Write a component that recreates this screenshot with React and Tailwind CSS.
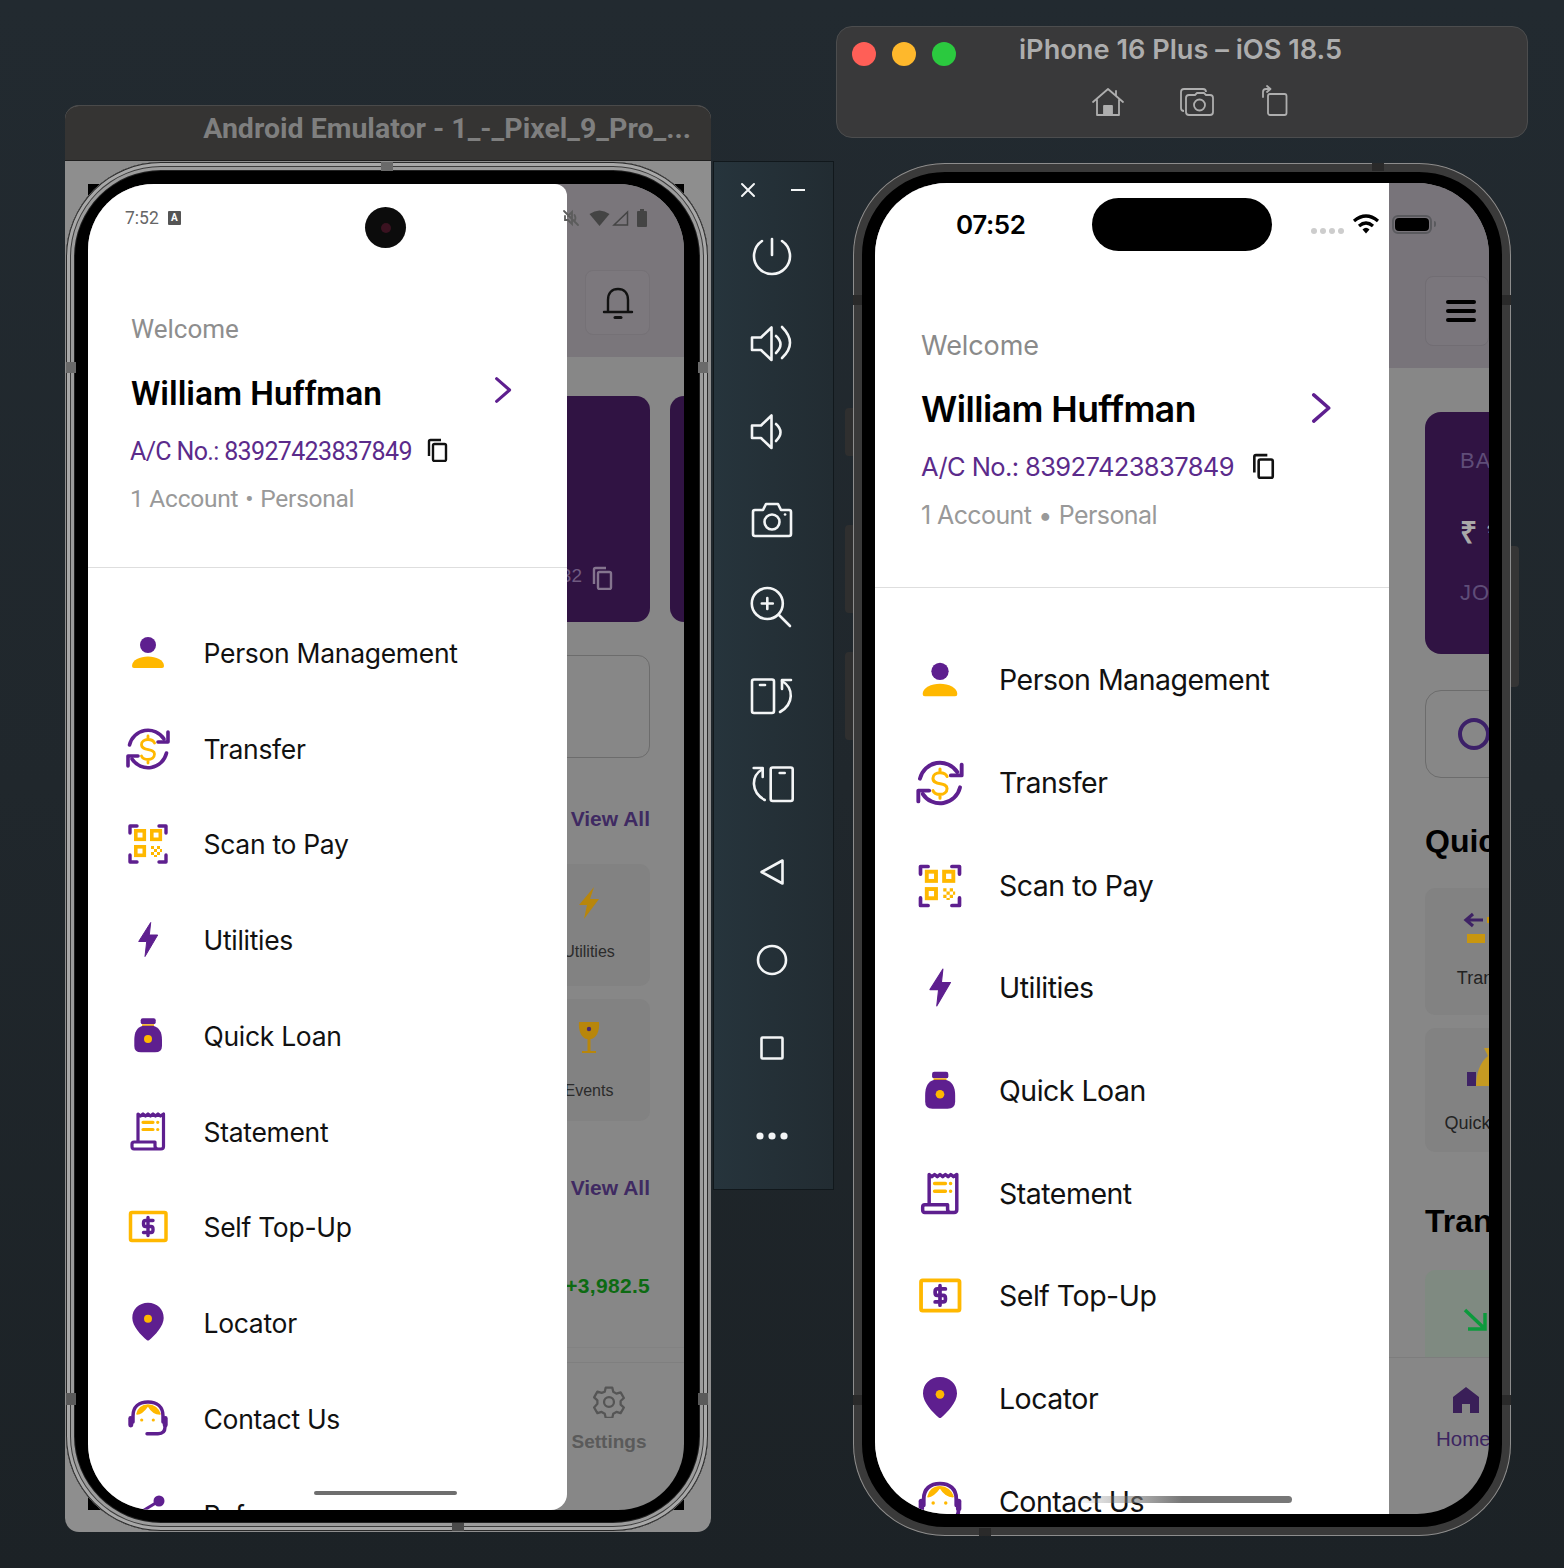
const P = "#5e1f8f";
const Y = "#ffb800";

function MenuIcon({ name, size }) {
  const common = { width: size, height: size, viewBox: "0 0 48 48", fill: "none", className: "shrink-0" };
  const stroke = { strokeLinecap: "round", strokeLinejoin: "round" };
  if (name === "person")
    return (
      <svg {...common}>
        <circle cx="24" cy="16" r="8" fill={P} />
        <path d="M8 37c0-6 8-9.500 16-9.500s16 3.500 16 9.500q0 2-2 2H10q-2 0-2-2z" fill={Y} />
      </svg>
    );
  if (name === "transfer")
    return (
      <svg {...common} {...stroke}>
        <g stroke={P} strokeWidth="3.600">
          <path d="M5.500 20A19 19 0 0 1 40 14" />
          <path d="M44 7V17H34" />
          <path d="M42.500 28A19 19 0 0 1 8 34" />
          <path d="M4 41V31H14" />
        </g>
        <path d="M30.500 18c-1-2.500-3.500-3.500-6.500-3.500-3.500 0-6.500 2-6.500 5 0 7.500 13 3 13 9.500 0 3.500-3 5.500-6.500 5.500-3 0-5.500-1-6.500-3.500M24 11v3.500M24 34.500V38" stroke={Y} strokeWidth="2.800" />
      </svg>
    );
  if (name === "scan")
    return (
      <svg {...common} {...stroke}>
        <g stroke={P} strokeWidth="3.400">
          <path d="M6 13V6H13M35 6H42V13M6 35V42H13M35 42H42V35" />
        </g>
        <g stroke={Y} strokeWidth="3.600" strokeLinejoin="miter">
          <rect x="11.800" y="10.800" width="8.500" height="8.500" />
          <rect x="27.800" y="10.800" width="8.500" height="8.500" />
          <rect x="11.800" y="26.800" width="8.500" height="8.500" />
        </g>
        <path d="M27 26h3v3h-3zM33 26h3v3h-3zM30 29h3v3h-3zM36 29h2v3h-2zM27 32h3v3h-3zM33 32h3v3h-3zM30 35h3v2h-3z" fill={Y} />
      </svg>
    );
  if (name === "bolt")
    return (
      <svg {...common}>
        <path d="M26.700 6.500L14.700 25.500H22.700L21 40.500L33.700 19H25.300Z" fill={P} stroke={P} strokeWidth="1" strokeLinejoin="round" />
      </svg>
    );
  if (name === "loan")
    return (
      <svg {...common}>
        <rect x="16.700" y="6.300" width="15" height="6" rx="2" fill={P} />
        <rect x="18" y="12.300" width="12" height="1.600" fill={Y} />
        <path d="M19 13.700H29C35 15 38 20 38 28V34Q38 40.300 31 40.300H17Q10.300 40.300 10.300 34V28C10.300 20 13 15 19 13.700Z" fill={P} />
        <circle cx="24" cy="27" r="4" fill={Y} />
      </svg>
    );
  if (name === "statement")
    return (
      <svg {...common} {...stroke}>
        <path d="M14 34V6L16.500 8 19 6l2.500 2L24 6l2.500 2L29 6l2.500 2L34 6l2.500 2L39.500 6V38.500Q39.500 41 37 41H10Q8 41 8 38.500V36Q8 34 10 34H31V38Q31 41 34 41" stroke={P} strokeWidth="3.200" />
        <path d="M19 14.300H29M19 21.500H29M33.700 14.300h.1M33.700 21.500h.1" stroke={Y} strokeWidth="3.200" />
      </svg>
    );
  if (name === "topup")
    return (
      <svg {...common} {...stroke}>
        <rect x="6.500" y="9.500" width="35.500" height="28" rx="1.500" stroke={Y} strokeWidth="3.500" />
        <path d="M29 17.500H21.500Q19.500 17.500 19.500 20V21Q19.500 23.500 21.500 23.500H27Q29 23.500 29 26V27Q29 29.500 27 29.500H19.500M24 14.500V32.500" stroke={P} strokeWidth="3.400" />
      </svg>
    );
  if (name === "locator")
    return (
      <svg {...common}>
        <path d="M24 3.700C33 3.700 39.700 10 39.700 19C39.700 27 31 36.500 25 41.200Q24 42 23 41.200C17 36.500 8.300 27 8.300 19C8.300 10 15 3.700 24 3.700Z" fill={P} />
        <circle cx="24" cy="19.700" r="4" fill={Y} />
      </svg>
    );
  if (name === "contact")
    return (
      <svg {...common} {...stroke}>
        <path d="M13 19c3 0 7-3 11-8.500 3 5 7 8.500 12 8.500-1.500-5-6-9-12-9s-10 4-11 9z" fill={Y} stroke={Y} strokeWidth="1.500" />
        <path d="M9 27V21C9 12 15 7 24 7s15 5 15 14v6" stroke={P} strokeWidth="3.500" />
        <rect x="4.300" y="21" width="5" height="11.500" rx="2.400" fill={P} />
        <rect x="38.700" y="21" width="5" height="11.500" rx="2.400" fill={P} />
        <path d="M41 32q0 6.700-7 6.700H23" stroke={P} strokeWidth="3.400" />
        <circle cx="17.700" cy="25" r="1.600" fill={Y} />
        <circle cx="29.300" cy="25" r="1.600" fill={Y} />
      </svg>
    );
  return (
    <svg {...common}>
      <path d="M35 10L12 24L35 38" stroke={P} strokeWidth="3" />
      <circle cx="35" cy="10" r="5.500" fill={P} />
      <circle cx="12" cy="24" r="5.500" fill={P} />
      <circle cx="35" cy="38" r="5.500" fill={P} />
    </svg>
  );
}

const androidMenu = [
  ["person", "Person Management"],
  ["transfer", "Transfer"],
  ["scan", "Scan to Pay"],
  ["bolt", "Utilities"],
  ["loan", "Quick Loan"],
  ["statement", "Statement"],
  ["topup", "Self Top-Up"],
  ["locator", "Locator"],
  ["contact", "Contact Us"],
  ["refer", "Refer"],
];
const iosMenu = androidMenu.slice(0, 9);

function Chevron({ size }) {
  return (
    <svg width={size} height={size} viewBox="0 0 24 24" fill="none" stroke={P} strokeWidth="2.800" strokeLinecap="round" strokeLinejoin="round" className="shrink-0">
      <path d="M7 1.500L19 12L7 22.500" />
    </svg>
  );
}

function Copy({ size, color = "#111" }) {
  return (
    <svg width={size} height={size} viewBox="0 0 24 24" fill="none" stroke={color} strokeWidth="2.400" className="shrink-0">
      <path d="M4 18V3.500Q4 2 5.500 2H16" />
      <rect x="8" y="6" width="13" height="17" rx="1.500" />
    </svg>
  );
}

function Notch({ className }) {
  return <div className={"absolute " + className} />;
}

function AndroidApp() {
  return (
    <div className="flex h-full w-full flex-col bg-[#878787] [font-family:'Liberation_Sans',sans-serif]">
      <div className="flex h-[173px] shrink-0 items-start justify-end bg-[#7a767b] pr-[34px] pt-[86px]">
        <div className="flex h-[65px] w-[65px] items-center justify-center rounded-lg border border-[#757176] bg-[#7c787d]">
          <svg width="36" height="36" viewBox="0 0 36 36" fill="none" stroke="#111" strokeWidth="2.400" strokeLinecap="round">
            <path d="M8 26V15C8 8 12 4 18 4s10 4 10 11v11M4 27H32" />
            <path d="M15 32.500H21" strokeWidth="3" />
          </svg>
        </div>
      </div>
      <div className="mt-[39px] flex h-[226px] shrink-0 justify-start gap-5 pl-[302px]">
        <div className="relative flex h-full w-[260px] shrink-0 items-end justify-end gap-2 rounded-[14px] bg-[#301343] pb-[32px] pr-[36px] text-[19px] text-[#6f5a80]">
          <span>32</span>
          <Copy size={24} color="#84748e" />
        </div>
        <div className="h-full w-[260px] shrink-0 rounded-[14px] bg-[#301343]" />
      </div>
      <div className="ml-[302px] mt-[33px] h-[103px] w-[260px] shrink-0 rounded-xl border border-[#6c6c6c]" />
      <div className="mr-[34px] mt-[48px] h-[26px] shrink-0 text-right text-[21px] font-bold leading-[26px] text-[#3f2a62]">View All</div>
      <div className="ml-[440px] mt-[32px] flex h-[122px] w-[122px] shrink-0 flex-col items-center rounded-[10px] bg-[#828282]">
        <svg width="26" height="36" viewBox="0 0 26 36" className="mt-[21px]">
          <path d="M18 2L3 20H11L8 34L23 14H14Z" fill="#b8860b" />
        </svg>
        <div className="mt-[21px] text-[16px] leading-[20px] text-[#2b2b2b]">Utilities</div>
      </div>
      <div className="ml-[440px] mt-[13px] flex h-[122px] w-[122px] shrink-0 flex-col items-center rounded-[10px] bg-[#828282]">
        <svg width="26" height="38" viewBox="0 0 26 38" className="mt-[20px]">
          <path d="M3 3H23C24 12 20 20 14.500 20V32H20V34H6V32H11.500V20C6 20 2 12 3 3Z" fill="#b8860b" />
          <circle cx="13" cy="10" r="2.200" fill="#4a2a70" />
        </svg>
        <div className="mt-[24px] text-[16px] leading-[20px] text-[#2b2b2b]">Events</div>
      </div>
      <div className="mr-[34px] mt-[54px] h-[26px] shrink-0 text-right text-[21px] font-bold leading-[26px] text-[#3f2a62]">View All</div>
      <div className="mr-[34px] mt-[72px] h-[26px] shrink-0 text-right text-[21px] font-bold leading-[26px] tracking-[0.3px] text-[#0d6a12]">+3,982.5</div>
      <div className="mt-[48px] h-px shrink-0 bg-[#828282]" />
      <div className="mt-[14px] flex flex-1 flex-col items-center border-t border-[#7f7f7f] pl-[446px]">
        <svg width="34" height="34" viewBox="0 0 24 24" fill="none" stroke="#555" strokeWidth="1.600" className="mt-[21px]" strokeLinejoin="round">
          <path d="M9.700 2.500h4.600l.7 3 2.200 1.300 3-.9 2.300 4-2.300 2.100v2.500l2.300 2.100-2.300 4-3-.9-2.200 1.300-.7 3H9.700l-.7-3-2.200-1.300-3 .9-2.300-4L3.800 14v-2.500L1.500 9.400l2.300-4 3 .9L9 5.500z" />
          <circle cx="12" cy="12.700" r="3.500" />
        </svg>
        <div className="mt-[12px] text-[19px] font-bold leading-[24px] text-[#5a5a5a]">Settings</div>
      </div>
    </div>
  );
}

function AndroidDrawer() {
  return (
    <div className="absolute bottom-0 left-0 top-0 w-[479px] overflow-hidden rounded-br-2xl rounded-tr-xl bg-white">
      <div className="h-[128px]" />
      <div className="pl-[43px] text-[26px] leading-[34px] text-[#8e8e8e] [font-family:Roboto,sans-serif]">Welcome</div>
      <div className="mt-[30px] flex h-[36px] items-center justify-between pl-[43px] pr-[52px]">
        <span className="text-[33.400px] font-semibold leading-[40px] text-black [font-family:Roboto,sans-serif]">William Huffman</span>
        <div className="mb-[8px]"><Chevron size={26} /></div>
      </div>
      <div className="mt-[24px] flex h-[32px] items-center gap-[13px] pl-[42px]">
        <span className="text-[25px] leading-[32px] tracking-[-0.65px] text-[#5b2b8b] [font-family:Roboto,sans-serif]">A/C No.: 83927423837849</span>
        <div className="mb-[4px]"><Copy size={24} /></div>
      </div>
      <div className="mt-[16px] pl-[42px] text-[24.500px] leading-[30px] tracking-[-0.25px] text-[#999] [font-family:Roboto,sans-serif]">
        1 Account<span className="mx-[7px]">•</span>Personal
      </div>
      <div className="mt-[53px] h-px bg-[#dedede]" />
      <div className="pl-[36px] pt-[37px]">
        {androidMenu.map(([icon, label]) => (
          <div key={label} className="flex h-[95.750px] items-center gap-[31.500px]">
            <MenuIcon name={icon} size={48} />
            <span className="text-[26.500px] leading-[34px] tracking-[-0.3px] text-[#111] [font-family:Inter,sans-serif]">{label}</span>
          </div>
        ))}
      </div>
    </div>
  );
}

function AndroidStatus() {
  return (
    <div className="absolute left-0 right-0 top-0 flex h-[68px] items-center pl-[37px] pr-[36px] [font-family:Roboto,sans-serif]">
      <span className="text-[17.500px] text-[#666]">7:52</span>
      <div className="ml-[9px] flex h-[14px] w-[13px] items-center justify-center rounded-[1px] bg-[#555] text-[10px] font-bold leading-none text-white">A</div>
      <div className="ml-auto flex items-center">
        <svg width="18" height="18" viewBox="0 0 18 18" fill="none" stroke="#5c5c5c" strokeWidth="1.800" strokeLinecap="round">
          <path d="M3 7v4h3l4 4V3L6 7M12.500 6q2 3 0 6M2 2l14 14" />
        </svg>
        <svg width="21" height="16" viewBox="0 0 21 16" className="ml-[9px]"><path d="M0.500 4Q10.500-3 20.500 4L10.500 16Z" fill="#444" /></svg>
        <svg width="17" height="16" viewBox="0 0 17 16" fill="none" stroke="#444" strokeWidth="1.500" className="ml-[2px]"><path d="M15.500 2V15H2Z" /></svg>
        <svg width="12" height="18" viewBox="0 0 12 18" className="ml-[7px]"><path d="M4 0h4v2h2q1 0 1 1v14q0 1-1 1H2q-1 0-1-1V3q0-1 1-1h2z" fill="#444" /></svg>
      </div>
    </div>
  );
}

function AndroidWindow() {
  return (
    <div className="absolute left-[65px] top-[105px] flex h-[1427px] w-[646px] flex-col overflow-hidden rounded-[14px] border-t border-[#4a4a4a] bg-[#8e8e8e]">
      <div className="flex h-[55px] shrink-0 items-center justify-end border-b border-[#1f1f1f] bg-[#353433] pb-[7px] pr-[20px] text-[28.500px] font-bold text-[#7f7f7f] [font-family:Roboto,sans-serif]">
        Android Emulator - 1_-_Pixel_9_Pro_...
      </div>
      <div className="relative flex-1">
        <div className="absolute left-[23px] top-[23px] h-[1326px] w-[596px] bg-black" />
        <div className="absolute left-[1px] top-[1px] h-[1369px] w-[642px] rounded-[95px] bg-black p-[22px_24px_21px_22px] shadow-[inset_0_0_0_1px_#2a2a2a,inset_0_0_0_4px_#a8a8a8,inset_0_0_0_5px_#3c3c3c,inset_0_0_0_8px_#9c9c9c,inset_0_0_0_9px_#222]">
          <Notch className="left-[315px] top-0 h-[9px] w-[12px] bg-[#6a6a6a]" />
          <Notch className="left-0 top-[200px] h-[11px] w-[10px] bg-[#6a6a6a]" />
          <Notch className="right-0 top-[200px] h-[11px] w-[10px] bg-[#6a6a6a]" />
          <Notch className="left-0 top-[1231px] h-[12px] w-[10px] bg-[#5a5a5a]" />
          <Notch className="right-0 top-[1231px] h-[12px] w-[10px] bg-[#5a5a5a]" />
          <Notch className="bottom-0 left-[386px] h-[8px] w-[12px] bg-[#4a4a4a]" />
          <div className="relative h-full w-full overflow-hidden rounded-[66px] bg-[#878787]">
            <AndroidApp />
            <AndroidDrawer />
            <AndroidStatus />
            <div className="absolute left-[277px] top-[23px] flex h-[41px] w-[41px] items-center justify-center rounded-full bg-[#0c0c0c]">
              <div className="h-[10px] w-[10px] rounded-full bg-[#3a1220]" />
            </div>
            <div className="absolute bottom-[15px] left-[226px] h-[4px] w-[143px] rounded-full bg-[#6e6e6e]" />
          </div>
        </div>
      </div>
    </div>
  );
}

function ToolIcon({ children }) {
  return (
    <div className="flex h-[88px] items-center justify-center pr-[3px]">
      <svg width="44" height="44" viewBox="0 0 44 44" fill="none" stroke="#f3f5f6" strokeWidth="2.600" strokeLinecap="round" strokeLinejoin="round">
        {children}
      </svg>
    </div>
  );
}

function Toolbar() {
  const rotate = (
    <>
      <rect x="2" y="5.500" width="22" height="33.500" rx="2" />
      <path d="M10 11H15" />
      <path d="M30 38C44 30 44 14 32 7" />
      <path d="M32 15V6H41" />
    </>
  );
  return (
    <div className="absolute left-[713px] top-[161px] flex h-[1029px] w-[121px] flex-col border border-[#11181c] bg-gradient-to-r from-[#26343c] to-[#222c32]">
      <div className="flex h-[50px] shrink-0 items-center justify-between pl-[26px] pr-[28px] pt-[6px]">
        <svg width="16" height="16" viewBox="0 0 16 16" stroke="#f3f5f6" strokeWidth="2" strokeLinecap="round"><path d="M2 2L14 14M14 2L2 14" /></svg>
        <div className="h-[2px] w-[14px] bg-[#f3f5f6]" />
      </div>
      <ToolIcon>
        <path d="M22 5V21" />
        <path d="M12 7A18 18 0 1 0 32 7" />
      </ToolIcon>
      <ToolIcon>
        <path d="M2 15.500H11L21.500 5.500V38L11 28H2Z" />
        <path d="M26 14Q35 22 26 31" />
        <path d="M32 5Q48 21 32 36" />
      </ToolIcon>
      <ToolIcon>
        <path d="M2 15.500H11L21.500 5.500V38L11 28H2Z" />
        <path d="M26 14Q35 22 26 31" />
      </ToolIcon>
      <ToolIcon>
        <g transform="translate(0 2)">
          <path d="M3 12q0-2 2-2h8l3-6h12l3 6h8q2 0 2 2v22q0 2-2 2H5q-2 0-2-2z" />
          <circle cx="22" cy="22" r="7.500" />
          <path d="M35 14.500h.1" />
        </g>
      </ToolIcon>
      <ToolIcon>
        <g transform="translate(0 -2)">
          <circle cx="17.300" cy="19.500" r="15.500" />
          <path d="M17.300 14V25M11.800 19.500H22.800" />
          <path d="M29 31L40 42" />
        </g>
      </ToolIcon>
      <ToolIcon>{rotate}</ToolIcon>
      <ToolIcon><g transform="matrix(-1 0 0 1 44.700 0)">{rotate}</g></ToolIcon>
      <ToolIcon><path d="M32.500 10.500V33.500L11.500 22Z" /></ToolIcon>
      <ToolIcon><circle cx="22" cy="22" r="14" /></ToolIcon>
      <ToolIcon><rect x="11.500" y="11.500" width="21" height="21" rx="1" /></ToolIcon>
      <ToolIcon>
        <g fill="#f3f5f6" stroke="none">
          <circle cx="10" cy="22" r="3.600" />
          <circle cx="22" cy="22" r="3.600" />
          <circle cx="34" cy="22" r="3.600" />
        </g>
      </ToolIcon>
    </div>
  );
}

function MacBar() {
  return (
    <div className="absolute left-[836px] top-[26px] flex h-[112px] w-[692px] flex-col rounded-[16px] border border-[#4c4d4e] bg-[#39393a]">
      <div className="flex h-[47px] shrink-0 items-center pl-[15px] pt-[7px]">
        <div className="h-[24px] w-[24px] rounded-full bg-[#ff5f57]" />
        <div className="ml-[16px] h-[24px] w-[24px] rounded-full bg-[#feb82c]" />
        <div className="ml-[16px] h-[24px] w-[24px] rounded-full bg-[#2bc93f]" />
        <div className="ml-[63px] mt-[-8px] whitespace-nowrap text-[27.200px] font-semibold leading-[32px] text-[#adadad] [font-family:Inter,sans-serif]">iPhone 16 Plus – iOS 18.5</div>
      </div>
      <div className="flex items-center pl-[254px] pt-[13px]">
        <svg width="34" height="30" viewBox="0 0 34 30" fill="none" stroke="#aeaeae" strokeWidth="1.800" strokeLinejoin="round" strokeLinecap="round">
          <path d="M2 15L17 2L32 15M6 13V28H28V13M25 4V9" />
          <path d="M13 28V19H21V28Z" fill="#aeaeae" />
        </svg>
        <svg className="ml-[54px]" width="36" height="30" viewBox="0 0 36 30" fill="none" stroke="#aeaeae" strokeWidth="1.800" strokeLinejoin="round">
          <path d="M5 24Q2 24 2 21V5Q2 2 5 2H24Q27 2 27 5" />
          <path d="M7 11Q7 8 10 8H16L18 6H25L27 8H31Q34 8 34 11V25Q34 28 31 28H10Q7 28 7 25Z" />
          <circle cx="20.500" cy="18" r="5.500" />
        </svg>
        <svg className="ml-[45px] mt-[-2px]" width="28" height="32" viewBox="0 0 28 32" fill="none" stroke="#aeaeae" strokeWidth="1.800" strokeLinejoin="round" strokeLinecap="round">
          <rect x="8" y="9" width="18.500" height="21" rx="2" />
          <path d="M3 12V7Q3 4 6 4H10M7 1L10.500 4L7 7" />
        </svg>
      </div>
    </div>
  );
}

function IosApp() {
  return (
    <div className="flex h-full w-full flex-col bg-[#878787] [font-family:'Liberation_Sans',sans-serif]">
      <div className="flex h-[185px] shrink-0 items-start bg-[#78747a] pl-[550px] pt-[93px]">
        <div className="flex h-[70px] w-[100px] items-center rounded-lg border border-[#716d73] bg-[#7a767c] pl-[20px]">
          <div className="flex w-[30px] flex-col gap-[5px]">
            <div className="h-[4px] rounded-full bg-black" />
            <div className="h-[4px] rounded-full bg-black" />
            <div className="h-[4px] rounded-full bg-black" />
          </div>
        </div>
      </div>
      <div className="ml-[550px] mt-[44px] flex h-[242px] w-[300px] shrink-0 flex-col rounded-[16px] bg-[#301343] pl-[35px] pt-[36px] text-[22px] tracking-[1px]">
        <div className="h-[26px] leading-[26px] text-[#5f4d78]">BANK</div>
        <div className="mt-[46px] h-[26px] text-[30px] font-bold leading-[26px] text-[#a9a9a9]">₹ ****</div>
        <div className="mt-[34px] h-[26px] leading-[26px] text-[#5f4d78]">JOHN</div>
      </div>
      <div className="ml-[550px] mt-[36px] flex h-[88px] w-[300px] shrink-0 items-center rounded-2xl border border-[#6c6c6c] pl-[32px]">
        <div className="relative h-[32px] w-[32px] rounded-full border-[4px] border-[#3c2068]">
          <div className="absolute bottom-[-8px] right-[-10px] h-[5px] w-[5px] bg-[#a98a20]" />
        </div>
      </div>
      <div className="ml-[550px] mt-[44px] h-[38px] w-[400px] shrink-0 whitespace-nowrap text-[32px] font-bold leading-[38px] text-black">Quick Actions</div>
      <div className="ml-[550px] mt-[28px] flex h-[127px] w-[130px] shrink-0 flex-col items-center rounded-[10px] bg-[#828282]">
        <svg width="60" height="44" viewBox="0 0 60 44" className="mt-[21px]">
          <path d="M13 5L6 11L13 17M6 11H23" stroke="#3e2265" strokeWidth="3.200" fill="none" />
          <rect x="7" y="25" width="18" height="9" fill="#c8960f" />
          <rect x="27" y="8" width="14" height="6" fill="#c8960f" />
        </svg>
        <div className="mt-[14px] text-[18px] leading-[22px] text-[#222]">Transfer</div>
      </div>
      <div className="ml-[550px] mt-[13px] flex h-[124px] w-[130px] shrink-0 flex-col items-center rounded-[10px] bg-[#828282]">
        <svg width="60" height="46" viewBox="0 0 60 46" className="mt-[20px]">
          <rect x="7" y="24" width="9" height="14" fill="#3e2265" />
          <path d="M24 0H40L36 8C46 12 50 22 50 38H16C16 26 20 14 28 8Z" fill="#c59a22" />
        </svg>
        <div className="mt-[18px] whitespace-nowrap text-[18px] leading-[22px] text-[#222]">Quick Loan</div>
      </div>
      <div className="ml-[550px] mt-[50px] h-[38px] w-[400px] shrink-0 whitespace-nowrap text-[32px] font-bold leading-[38px] text-black">Transactions</div>
      <div className="ml-[550px] mt-[30px] flex h-[87px] w-[130px] shrink-0 items-center rounded-t-[10px] bg-[#7f8a81] pl-[37px]">
        <svg width="26" height="26" viewBox="0 0 26 26" fill="none" stroke="#0c9a3c" strokeWidth="3.500" className="mt-[12px]">
          <path d="M3 3L22 21M23 6V22H6" />
        </svg>
      </div>
      <div className="flex flex-1 flex-col border-t border-[#7d7d7d] pl-[561px]">
        <svg width="28" height="28" viewBox="0 0 28 28" className="ml-[16px] mt-[28px]">
          <path d="M14 1L27 11V27H18V18H10V27H1V11Z" fill="#3a1f58" />
        </svg>
        <div className="mt-[13px] text-[20.500px] leading-[24px] text-[#3c2560]">Home</div>
      </div>
    </div>
  );
}

function IosDrawer() {
  return (
    <div className="absolute bottom-0 left-0 top-0 w-[514px] overflow-hidden bg-white">
      <div className="h-[146px]" />
      <div className="pl-[46px] text-[27px] leading-[34px] tracking-[-0.1px] text-[#8a8a8a] [font-family:Inter,sans-serif]">Welcome</div>
      <div className="mt-[26px] flex h-[42px] items-center justify-between pl-[46px] pr-[54px]">
        <span className="text-[35.500px] font-semibold leading-[42px] tracking-[-0.55px] text-black [font-family:Inter,sans-serif]">William Huffman</span>
        <div className="mb-[4px]"><Chevron size={30} /></div>
      </div>
      <div className="mt-[20px] flex h-[32px] items-center gap-[16px] pl-[46px]">
        <span className="text-[25.500px] leading-[32px] tracking-[-0.6px] text-[#5b2b8b] [font-family:Inter,sans-serif]">A/C No.: 83927423837849</span>
        <div className="mb-[2px]"><Copy size={26} /></div>
      </div>
      <div className="mt-[17px] pl-[46px] text-[25px] leading-[30px] tracking-[-0.6px] text-[#999] [font-family:Inter,sans-serif]">
        1 Account<span className="mx-[7px]">•</span>Personal
      </div>
      <div className="mt-[57px] h-px bg-[#dedede]" />
      <div className="pl-[39px] pt-[41px]">
        {iosMenu.map(([icon, label]) => (
          <div key={label} className="flex h-[102.700px] items-center gap-[33px]">
            <MenuIcon name={icon} size={52} />
            <span className="text-[28.500px] leading-[36px] tracking-[-0.5px] text-[#111] [font-family:Inter,sans-serif]">{label}</span>
          </div>
        ))}
      </div>
    </div>
  );
}

function IosStatus() {
  return (
    <div className="absolute left-0 right-0 top-0 flex h-[84px] items-center pl-[81px] [font-family:Inter,sans-serif]">
      <span className="w-[136px] text-[26px] font-semibold leading-[32px] tracking-[-0.4px] text-black">07:52</span>
      <div className="mt-[-1px] h-[53px] w-[180px] rounded-full bg-black" />
      <div className="ml-[39px] mt-[12px] flex gap-[3px]">
        <div className="h-[6px] w-[6px] rounded-full bg-[#cdcdcd]" />
        <div className="h-[6px] w-[6px] rounded-full bg-[#cdcdcd]" />
        <div className="h-[6px] w-[6px] rounded-full bg-[#cdcdcd]" />
        <div className="h-[6px] w-[6px] rounded-full bg-[#cdcdcd]" />
      </div>
      <svg width="28" height="22" viewBox="0 0 28 22" fill="none" stroke="#000" strokeWidth="3.200" className="ml-[8px] mt-[-2px]">
        <path d="M2 8Q14-2 26 8" />
        <path d="M7 13Q14 7 21 13" />
        <path d="M10.500 16.500L14 20.500L17.500 16.500Q14 13 10.500 16.500Z" fill="#000" stroke="none" />
      </svg>
      <div className="ml-[12px] mt-[-2px] flex h-[19px] w-[40px] shrink-0 items-center justify-center rounded-[6px] border-2 border-[#5a5a5e]">
        <div className="h-[13px] w-[34px] rounded-[4px] bg-black" />
      </div>
      <div className="ml-[2px] mt-[-2px] h-[6px] w-[2px] rounded-r-sm bg-[#5a5a5e]" />
    </div>
  );
}

function IosPhone() {
  return (
    <div className="absolute left-[853px] top-[163px] h-[1373px] w-[658px]">
      <div className="absolute left-[-8px] top-[245px] h-[48px] w-[8px] rounded-l-sm bg-[#2f2f2f]" />
      <div className="absolute left-[-8px] top-[362px] h-[88px] w-[8px] rounded-l-sm bg-[#2f2f2f]" />
      <div className="absolute left-[-8px] top-[489px] h-[88px] w-[8px] rounded-l-sm bg-[#2f2f2f]" />
      <div className="absolute right-[-8px] top-[383px] h-[141px] w-[8px] rounded-r-sm bg-[#353535]" />
      <div className="relative h-full w-full rounded-[92px] bg-black p-[20px_22px_22px_22px] shadow-[inset_0_0_0_1px_#8d8d8d,inset_0_0_0_9px_#3a3a3a]">
        <Notch className="left-[519px] top-0 h-[8px] w-[12px] bg-[#2a2a2a]" />
        <Notch className="bottom-0 left-[126px] h-[8px] w-[12px] bg-[#2a2a2a]" />
        <Notch className="left-0 top-[132px] h-[10px] w-[9px] bg-[#2a2a2a]" />
        <Notch className="right-0 top-[132px] h-[10px] w-[9px] bg-[#2a2a2a]" />
        <Notch className="left-0 top-[1232px] h-[10px] w-[9px] bg-[#2a2a2a]" />
        <Notch className="right-0 top-[1232px] h-[10px] w-[9px] bg-[#2a2a2a]" />
        <div className="relative h-full w-full overflow-hidden rounded-[72px] bg-[#878787]">
          <IosApp />
          <IosDrawer />
          <IosStatus />
          <div className="absolute bottom-[11px] left-[197px] h-[7px] w-[220px] rounded-full bg-gradient-to-r from-transparent via-[#777] to-[#777]" />
        </div>
      </div>
    </div>
  );
}

export default function App() {
  return (
    <div className="relative h-[1568px] w-[1564px] overflow-hidden bg-gradient-to-b from-[#222a30] via-[#20272c] to-[#1c2226]">
      <AndroidWindow />
      <Toolbar />
      <MacBar />
      <IosPhone />
    </div>
  );
}
